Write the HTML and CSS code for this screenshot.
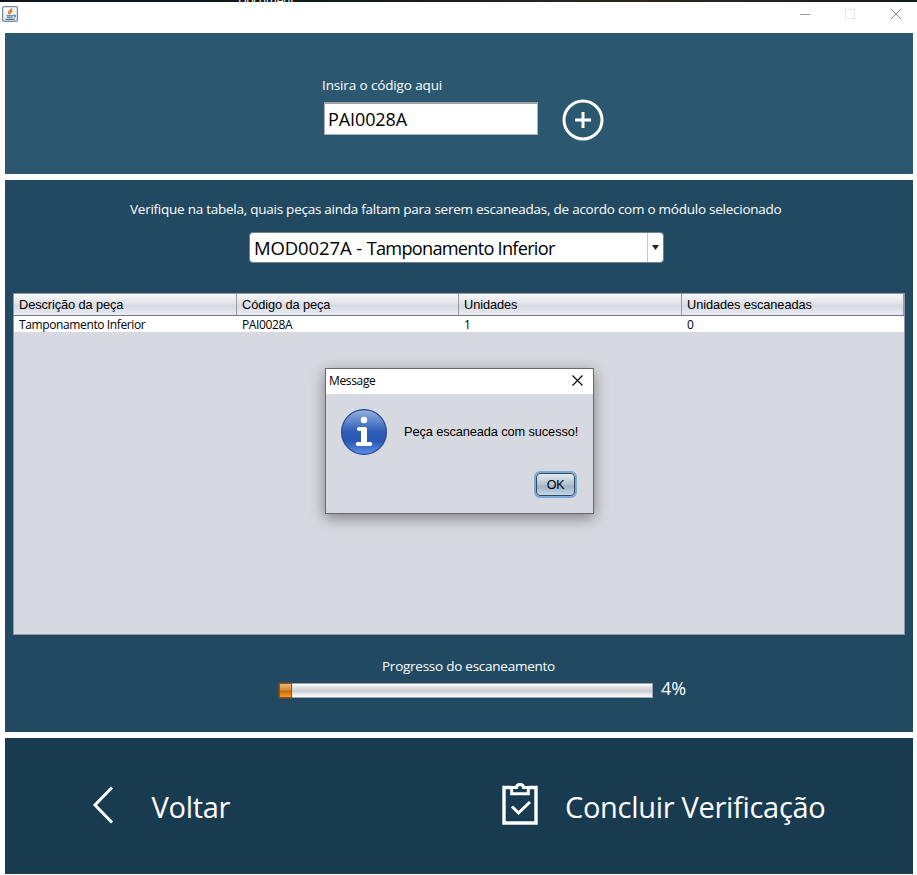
FILE: index.html
```html
<!DOCTYPE html>
<html lang="pt-BR">
<head>
<meta charset="utf-8">
<title>Verificação</title>
<link rel="stylesheet" href="styles.css">
</head>
<body>
<div class="backdrop"><span>Document</span></div>
<header class="titlebar">
  <svg class="java" width="16" height="16" viewBox="0 0 16 16">
    <defs><linearGradient id="jb" x1="0" y1="0" x2="0" y2="1"><stop offset="0" stop-color="#fff"/><stop offset="1" stop-color="#dfe6ec"/></linearGradient></defs>
    <rect x=".6" y=".6" width="14.8" height="14.8" rx="1.5" fill="url(#jb)" stroke="#6f8ba0" stroke-width="1.2"/>
    <path d="M9.600 2.300C9.800 4.400 5.800 5 6.500 6.800L7.800 8.300M10.500 4.300C8 5.300 8.500 6.500 9 7.600" fill="none" stroke="#ea7a22" stroke-width="1.400"/>
    <path d="M4.500 9.800h7M5 11.300h5.500M3.500 13.400h9M11.500 9.300c2.400-.6 2.400 1.600.3 2" fill="none" stroke="#48708f" stroke-width="1.100"/>
  </svg>
  <svg class="controls" width="103" height="12" viewBox="0 0 103 12" fill="none">
    <path d="M1 6.500h10" stroke="#999"/>
    <rect x="46.500" y="1.500" width="9" height="9" stroke="#e6e6e6"/>
    <path d="M92 1l10 10M102 1l-10 10" stroke="#888"/>
  </svg>
</header>
<main class="panels">
  <section class="panel entry">
    <div class="field">
      <label class="caption c-insira" for="code">Insira o código aqui</label>
      <div class="input" id="code"><span>PAI0028A</span></div>
    </div>
    <svg class="add" width="42" height="42" viewBox="0 0 42 42" fill="none" stroke="#fff">
      <circle cx="21" cy="21" r="19" stroke-width="3"/>
      <path d="M21 13v16M13 21h16" stroke-width="3"/>
    </svg>
  </section>
  <section class="panel check">
    <p class="caption c-verifique">Verifique na tabela, quais peças ainda faltam para serem escaneadas, de acordo com o módulo selecionado</p>
    <div class="combo">
      <span class="combo-text">MOD0027A - <span class="module">Tamponamento Inferior</span></span>
      <span class="combo-arrow"><svg width="7" height="5" viewBox="0 0 7 5"><path d="M0 0h7L3.500 5z" fill="#222"/></svg></span>
    </div>
    <div class="table">
      <div class="row head">
        <span>Descrição da peça</span><span>Código da peça</span><span>Unidades</span><span>Unidades escaneadas</span>
      </div>
      <div class="row data">
        <span>Tamponamento Inferior</span><span>PAI0028A</span><span>1</span><span>0</span>
      </div>
    </div>
    <p class="caption c-progresso">Progresso do escaneamento</p>
    <div class="progress">
      <div class="bar"><div class="fill"></div></div>
      <span class="percent">4%</span>
    </div>
  </section>
  <section class="panel actions">
    <div class="action back">
      <svg width="22" height="38" viewBox="0 0 22 38"><path d="M20 1.500L3 19l17 17.500" fill="none" stroke="#fff" stroke-width="3"/></svg>
      <span class="t-voltar">Voltar</span>
    </div>
    <div class="action finish">
      <svg width="36" height="43" viewBox="0 0 36 43" fill="none" stroke="#fff">
        <path d="M9 4.500H2v35.500h32V4.500H27" stroke-width="3.400"/>
        <path d="M9.700 4.500h4.800c0-4 7-4 7 0h4.800v6.300H9.700z" stroke-width="3"/>
        <path d="M10 23.500l6.500 6.500L28 19" stroke-width="3"/>
      </svg>
      <span class="t-concluir">Concluir Verificação</span>
    </div>
  </section>
</main>
<div class="dialog">
  <div class="dialog-title"><span>Message</span>
    <svg width="11" height="11" viewBox="0 0 11 11"><path d="M.5.5l10 10M10.500.5l-10 10" stroke="#000" stroke-width="1.100"/></svg>
  </div>
  <div class="dialog-body">
    <svg width="46" height="46" viewBox="0 0 46 46">
      <defs><linearGradient id="info" x1="0" y1="0" x2="0" y2="1"><stop offset="0" stop-color="#9ab3e2"/><stop offset=".48" stop-color="#2f5fb8"/><stop offset=".7" stop-color="#2858b4"/><stop offset="1" stop-color="#5b90ea"/></linearGradient></defs>
      <circle cx="23" cy="23" r="22.400" fill="url(#info)" stroke="#24468f" stroke-width="1.200"/>
      <circle cx="23" cy="11" r="3.200" fill="#fff"/>
      <path d="M18 20h6v15M16.700 35h12.600" fill="none" stroke="#fff" stroke-width="4" stroke-linecap="round" stroke-linejoin="round"/>
      <path d="M23 20v15" stroke="#fff" stroke-width="6"/>
    </svg>
    <span class="dialog-text">Peça escaneada com sucesso!</span>
  </div>
  <div class="dialog-foot"><button class="ok" type="button">OK</button></div>
</div>
</body>
</html>
```
FILE: styles.css
```css
* { box-sizing: border-box; }
body {
  margin: 0;
  width: 917px;
  height: 875px;
  overflow: hidden;
  background: #fff;
  font-family: "Open Sans", "Noto Sans", sans-serif;
  color: #fff;
  display: flex;
  flex-direction: column;
}
p { margin: 0; }
svg { display: block; flex: none; }
span, label, p { white-space: nowrap; }
.backdrop {
  height: 2px;
  overflow: hidden;
  background: linear-gradient(90deg, #10161a, #151a1c 40%, #2d2823 70%, #151a1c);
  padding-left: 238px;
  font-size: 12px;
  letter-spacing: -.3px;
  line-height: 2px;
}
.backdrop span { display: block; }
.titlebar {
  height: 31px;
  padding: 4px 15px 0 2px;
  display: flex;
  justify-content: space-between;
}
.controls { margin-top: 2px; }
.panels {
  padding: 0 4px 0 5px;
  display: flex;
  flex-direction: column;
  gap: 6px;
}
.entry {
  height: 141px;
  background: #2b5771;
  display: flex;
  padding: 42px 0 0 317px;
}
.field { width: 216px; }
.caption { display: block; font-size: 13.5px; line-height: 20px; letter-spacing: -.25px; }
.c-insira { letter-spacing: -.13px; }
.input {
  margin: 7px 0 0 2px;
  width: 214px;
  height: 33px;
  background: #fff;
  border: 1px solid #a9aeb5;
  border-top: 2px solid #a4a4a4;
  color: #000;
  font-size: 18px;
  letter-spacing: -.1px;
  line-height: 31px;
  padding-left: 3px;
}
.add { margin: 24px 0 0 24px; }
.check {
  height: 552px;
  background: #214961;
  display: flex;
  flex-direction: column;
}
.c-verifique { margin: 19px 0 0 125px; }
.combo {
  margin: 13px 0 0 244px;
  width: 415px;
  height: 31px;
  background: #fff;
  border: 1px solid #777f8b;
  border-radius: 4px;
  display: flex;
  color: #000;
}
.combo-text { flex: 1; padding-left: 4px; font-size: 18.5px; letter-spacing: -.12px; line-height: 29px; }
.module { font-size: 18.2px; letter-spacing: -.75px; }
.combo-arrow {
  width: 16px;
  border-left: 1px solid #c3c6ca;
  display: flex;
  align-items: center;
  justify-content: center;
}
.table {
  margin: 30px 8px 0;
  height: 342px;
  background: #d6d9df;
  border: 1px solid #92979f;
  color: #000;
}
.row { display: grid; grid-template-columns: 223px 222px 223px 222px; }
.head {
  height: 22px;
  border-bottom: 1px solid #737983;
  background: linear-gradient(#f6f7f9, #dfe2e7 48%, #d6d9df 52%, #e9ecf2);
  font: 12.8px/21px "Liberation Sans", sans-serif;
  letter-spacing: -.1px;
}
.head span { padding-left: 5px; border-right: 1px solid #969ba4; }
.data { height: 16px; background: #fff; font-size: 12px; line-height: 17px; letter-spacing: -.38px; }
.data span { padding-left: 5px; }
.c-progresso { margin: 21px 0 0 377px; }
.progress { display: flex; margin: 2px 0 0 274px; height: 22px; }
.bar {
  width: 374px;
  height: 15px;
  margin-top: 5px;
  border: 1px solid #a0a4aa;
  background: linear-gradient(#fff, #dfe0e3 25%, #cccdd1 55%, #e3e4e6 75%, #fff);
}
.fill {
  width: 13px;
  height: 15px;
  margin: -1px;
  border: 1px solid #9c4c08;
  box-shadow: -1px 0 #5a4b3f, 0 -1px #5a4b3f, 0 1px #5a4b3f;
  background: linear-gradient(#e6b680, #d68a35 45%, #c46a00 55%, #f0a030);
}
.percent { margin-left: 8px; font-size: 18px; line-height: 20px; }
.actions {
  height: 136px;
  background: #193b4f;
  display: flex;
  padding-left: 87px;
}
.action { display: flex; font-size: 29px; line-height: 40px; letter-spacing: -.3px; }
.back { width: 410px; }
.back svg { margin-top: 48px; }
.t-voltar { margin: 49px 0 0 37.5px; }
.finish svg { margin-top: 45px; }
.t-concluir { margin: 49px 0 0 27px; }
.dialog {
  position: absolute;
  left: 325px;
  top: 368px;
  width: 269px;
  height: 146px;
  border: 1px solid #666a70;
  background: #d6d9df;
  box-shadow: 0 4px 14px rgba(0, 0, 0, .42);
  color: #000;
}
.dialog-title {
  height: 25px;
  background: #fff;
  display: flex;
  justify-content: space-between;
  align-items: center;
  padding: 0 10px 2px 3px;
  font-size: 12px;
  letter-spacing: -.35px;
}
.dialog-body { display: flex; padding: 15px 0 0 15px; }
.dialog-text { margin-left: 17px; font: 12.8px/46px "Liberation Sans", sans-serif; letter-spacing: -.11px; }
.dialog-foot { display: flex; justify-content: flex-end; padding: 17px 17px 0 0; }
.ok {
  width: 39px;
  height: 23px;
  margin: 1px 1px 0 0;
  padding: 0;
  border: 1px solid #35485a;
  border-radius: 4px;
  outline: 2px solid #79a9d4;
  background: linear-gradient(#e3eaf0, #b4c4d2 48%, #9fb3c5 60%, #c4d7e8);
  font: 12.5px "Liberation Sans", sans-serif;
  letter-spacing: -.3px;
  color: #000;
}
```
